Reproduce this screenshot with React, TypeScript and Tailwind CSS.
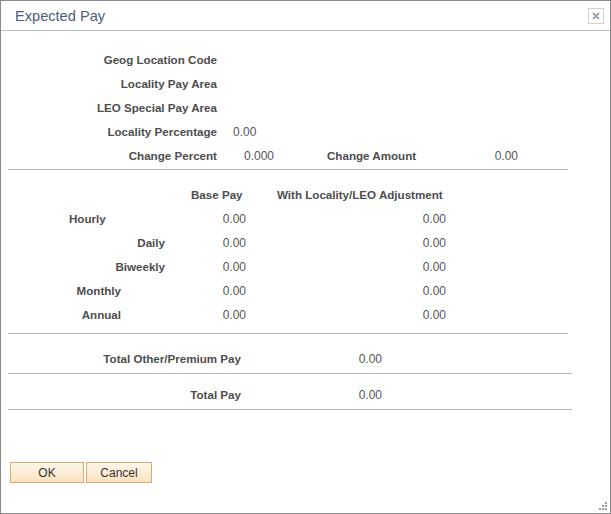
import React from "react"

const font = { fontFamily: '"Liberation Sans", Arial, sans-serif' }

const topRows = ["Geog Location Code", "Locality Pay Area", "LEO Special Pay Area"]

type PayRow = { label: string; align: "hourly" | "mid" | "narrow" }

const payRows: PayRow[] = [
  { label: "Hourly", align: "hourly" },
  { label: "Daily", align: "mid" },
  { label: "Biweekly", align: "mid" },
  { label: "Monthly", align: "narrow" },
  { label: "Annual", align: "narrow" },
]

const lbl = "font-bold text-[11.6px] text-[#4d4d4d] whitespace-nowrap"
const val = "text-[#555]"
const row = "h-6 pt-[2px] flex items-center"

function Rule({ wide }: { wide?: boolean }) {
  return <div className={"ml-[7px] h-px bg-[#b6b6b6] " + (wide ? "w-[564px]" : "w-[560px]")} />
}

export default function App() {
  return (
    <div className="w-[611px] h-[514px] bg-white" style={font}>
      <div className="w-[611px] h-[514px] border border-[#8a8a8a] flex flex-col text-[12px]">
        {/* title bar */}
        <div className="h-[30px] shrink-0 border-b border-[#b9c1c9] flex items-center justify-between pl-[14px] pr-[6px]">
          <span className="text-[14.6px] text-[#4b5d7e] leading-none pt-[2px]">Expected Pay</span>
          <button className="w-[16px] h-[16px] border border-[#d0d0d0] bg-white flex items-center justify-center">
            <svg width="8" height="8" viewBox="0 0 8 8">
              <path d="M1 1 L7 7 M7 1 L1 7" stroke="#9aa2ab" strokeWidth="1.8" />
            </svg>
          </button>
        </div>

        <div className="flex flex-col pt-[16px] flex-1 relative">
          {topRows.map((l) => (
            <div key={l} className={row}>
              <span className={"w-[216px] text-right " + lbl}>{l}</span>
            </div>
          ))}
          <div className={row}>
            <span className={"w-[216px] text-right " + lbl}>Locality Percentage</span>
            <span className={"ml-[16px] " + val}>0.00</span>
          </div>
          <div className={row}>
            <span className={"w-[216px] text-right " + lbl}>Change Percent</span>
            <span className={"w-[57px] text-right " + val}>0.000</span>
            <span className={"ml-[53px] w-[91px] " + lbl}>Change Amount</span>
            <span className={"w-[100px] text-right " + val}>0.00</span>
          </div>

          <div className="mt-[2px]">
            <Rule />
          </div>

          <div className={"mt-[12px] " + row}>
            <span className={"ml-[190px] w-[86px] " + lbl}>Base Pay</span>
            <span className={lbl}>With Locality/LEO Adjustment</span>
          </div>
          {payRows.map((r) => (
            <div key={r.label} className={row}>
              <span
                className={
                  "w-[164px] " +
                  lbl +
                  " " +
                  (r.align === "hourly" ? "pl-[68px]" : r.align === "mid" ? "text-right" : "text-right pr-[44px]")
                }
              >
                {r.label}
              </span>
              <span className={"w-[81px] text-right " + val}>0.00</span>
              <span className={"w-[200px] text-right " + val}>0.00</span>
            </div>
          ))}

          <div className="mt-[7px]">
            <Rule />
          </div>

          <div className={"mt-[12px] " + row}>
            <span className={"w-[240px] text-right " + lbl}>Total Other/Premium Pay</span>
            <span className={"w-[141px] text-right " + val}>0.00</span>
          </div>
          <div className="mt-[3px]">
            <Rule wide />
          </div>
          <div className={"mt-[8px] " + row}>
            <span className={"w-[240px] text-right " + lbl}>Total Pay</span>
            <span className={"w-[141px] text-right " + val}>0.00</span>
          </div>
          <div className="mt-[3px]">
            <Rule wide />
          </div>

          <div className="mt-[52px] ml-[9px] flex gap-[2px]">
            <button className="w-[74px] h-[21px] border border-[#e2a86e] bg-gradient-to-b from-[#fef7ec] to-[#fbe2c0] text-[12px] text-[#333]">
              OK
            </button>
            <button className="w-[66px] h-[21px] border border-[#e2a86e] bg-gradient-to-b from-[#fef7ec] to-[#fbe2c0] text-[12px] text-[#333]">
              Cancel
            </button>
          </div>

          <svg className="absolute right-[2px] bottom-[2px]" width="10" height="10" viewBox="0 0 10 10">
            <rect x="7" y="1" width="2" height="2" fill="#9a9a9a" />
            <rect x="4" y="4" width="2" height="2" fill="#9a9a9a" />
            <rect x="7" y="4" width="2" height="2" fill="#9a9a9a" />
            <rect x="1" y="7" width="2" height="2" fill="#9a9a9a" />
            <rect x="4" y="7" width="2" height="2" fill="#9a9a9a" />
            <rect x="7" y="7" width="2" height="2" fill="#9a9a9a" />
          </svg>
        </div>
      </div>
    </div>
  )
}
